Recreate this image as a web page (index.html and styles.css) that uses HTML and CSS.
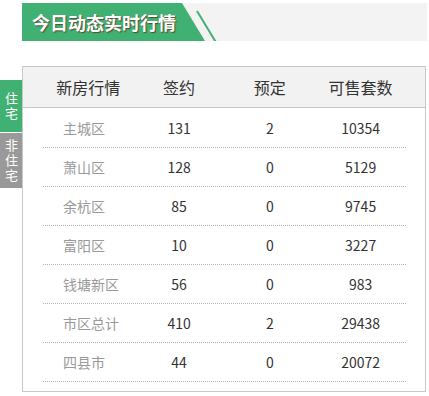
FILE: index.html
```html
<!DOCTYPE html>
<html lang="zh-CN">
<head>
<meta charset="utf-8">
<link rel="stylesheet" href="styles.css">
</head>
<body>
<div class="band">
  <div class="title">今日动态实时行情</div>
  <svg class="stripe" width="30" height="38" viewBox="0 0 30 38"><line x1="2" y1="8" x2="20.5" y2="38.5" stroke="#41b073" stroke-width="2"/></svg>
</div>
<div class="main">
  <div class="tabs">
    <div class="tab tab-on"><span class="vt">住宅</span></div>
    <div class="tab tab-off"><span class="vt">非住宅</span></div>
  </div>
  <div class="box">
    <div class="head">
      <div>新房行情</div><div>签约</div><div>预定</div><div>可售套数</div>
    </div>
    <div class="rows">
      <div class="row"><div class="name">主城区</div><div>131</div><div>2</div><div>10354</div></div>
      <div class="row"><div class="name">萧山区</div><div>128</div><div>0</div><div>5129</div></div>
      <div class="row"><div class="name">余杭区</div><div>85</div><div>0</div><div>9745</div></div>
      <div class="row"><div class="name">富阳区</div><div>10</div><div>0</div><div>3227</div></div>
      <div class="row"><div class="name">钱塘新区</div><div>56</div><div>0</div><div>983</div></div>
      <div class="row"><div class="name">市区总计</div><div>410</div><div>2</div><div>29438</div></div>
      <div class="row"><div class="name">四县市</div><div>44</div><div>0</div><div>20072</div></div>
    </div>
  </div>
</div>
</body>
</html>
```
FILE: styles.css
```css
* { box-sizing: border-box; }
body {
  margin: 0;
  background: #fff;
  font-family: "Microsoft YaHei", "Noto Sans CJK SC", sans-serif;
  color: #333;
}
.band {
  display: flex;
  margin: 3px 2px 0 22px;
  height: 38px;
  background: #f3f3f3;
}
.title {
  width: 183px;
  height: 38px;
  background: #41b073;
  clip-path: polygon(0 0, 160px 0, 183px 38px, 0 38px);
  color: #fff;
  font-weight: bold;
  font-size: 18px;
  line-height: 38px;
  padding-left: 10px;
  text-shadow: 1px 1px 1px #5a4a2a;
  letter-spacing: 0;
}
.stripe {
  margin-left: -10px;
  display: block;
}
.main {
  display: flex;
  margin-top: 25px;
}
.tabs {
  width: 22px;
  margin-top: 14px;
  display: flex;
  flex-direction: column;
  gap: 1px;
}
.tab {
  color: #fff;
  display: flex;
  align-items: center;
  justify-content: center;
}
.vt {
  writing-mode: vertical-rl;
  text-orientation: upright;
  font-size: 13px;
  line-height: 22px;
  letter-spacing: 2px;
  padding-top: 2px;
}
.tab-on { background: #41b073; height: 52px; }
.tab-off { background: #999; height: 55px; }
.box {
  width: 404px;
  border: 1px solid #c8c8c8;
  padding-bottom: 9px;
}
.head {
  display: grid;
  grid-template-columns: repeat(4, 1fr);
  height: 41px;
  padding: 0 19px 0 20px;
  background: #f2f2f2;
  border-bottom: 1px solid #c8c8c8;
  font-size: 16px;
  line-height: 40px;
  text-align: center;
  color: #333;
}
.rows {
  margin: 1px 19px 0 20px;
}
.row {
  display: grid;
  grid-template-columns: repeat(4, 1fr);
  height: 39px;
  border-bottom: 1px dotted #b4b4b4;
  font-size: 14px;
  line-height: 38px;
  text-align: center;
  color: #333;
}
.row .name {
  text-align: left;
  padding-left: 20px;
  color: #999;
}
```
